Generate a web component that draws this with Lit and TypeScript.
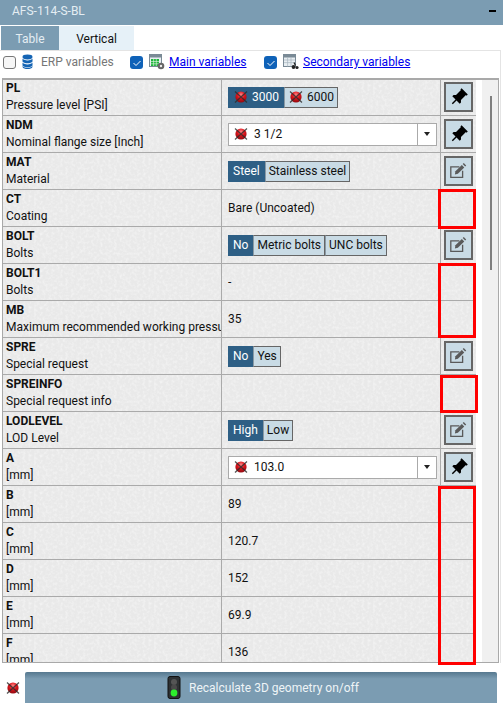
import { LitElement, html, css, svg } from "lit";
import { customElement } from "lit/decorators.js";

type Row = { k: string; l: string; v?: any; a?: "pin" | "edit" };

const noIcon = (cls = "no") => html`<svg class=${cls} viewBox="0 0 14 14">
  <defs><radialGradient id="rg" cx=".5" cy=".3" r=".7"><stop offset="0" stop-color="#f88"/><stop offset=".45" stop-color="#e0161d"/><stop offset="1" stop-color="#8d0a10"/></radialGradient></defs>
  <circle cx="7" cy="7" r="5.6" fill="url(#rg)"/>
  <path d="M1 1.5l12 11M13 1.5L1 12.5" stroke="#2c2c2c" stroke-width="1.3" opacity=".8"/>
</svg>`;

const pin = html`<svg class="ico" viewBox="0 0 24 24"><g transform="rotate(45 12 12)"><path fill="#000" d="M16 12V4h1V2H7v2h1v8l-2 2v2h5.2v6h1.6v-6H18v-2z"/></g></svg>`;
const edit = html`<svg class="ico" viewBox="0 0 24 24">
  <path d="M13 6.8H3.2v11.9h13.5v-7.5" fill="none" stroke="#5a5a5a" stroke-width="1.5"/>
  <path d="M8.5 11.8L15.8 4.5l2.8 2.8-7.3 7.3-3.4.8z" fill="#5a5a5a"/><path d="M16.8 3.5l1.2-1.2 2.8 2.8-1.2 1.2z" fill="#5a5a5a"/>
</svg>`;

const seg = (items: { t: string; on?: boolean; icon?: boolean }[]) => html`<div class="segs">
  ${items.map((i) => html`<span class="seg ${i.on ? "on" : ""}">${i.icon ? noIcon("no si") : ""}${i.t}</span>`)}
</div>`;
const drop = (t: string) => html`<div class="drop"><span class="dv">${noIcon()}${t}</span><span class="arrow"><i></i></span></div>`;

const rows: Row[] = [
  { k: "PL", l: "Pressure level [PSI]", v: seg([{ t: "3000", on: true, icon: true }, { t: "6000", icon: true }]), a: "pin" },
  { k: "NDM", l: "Nominal flange size [Inch]", v: drop("3 1/2"), a: "pin" },
  { k: "MAT", l: "Material", v: seg([{ t: "Steel", on: true }, { t: "Stainless steel" }]), a: "edit" },
  { k: "CT", l: "Coating", v: "Bare (Uncoated)" },
  { k: "BOLT", l: "Bolts", v: seg([{ t: "No", on: true }, { t: "Metric bolts" }, { t: "UNC bolts" }]), a: "edit" },
  { k: "BOLT1", l: "Bolts", v: "-" },
  { k: "MB", l: "Maximum recommended working pressure", v: "35" },
  { k: "SPRE", l: "Special request", v: seg([{ t: "No", on: true }, { t: "Yes" }]), a: "edit" },
  { k: "SPREINFO", l: "Special request info", v: "" },
  { k: "LODLEVEL", l: "LOD Level", v: seg([{ t: "High", on: true }, { t: "Low" }]), a: "edit" },
  { k: "A", l: "[mm]", v: drop("103.0"), a: "pin" },
  { k: "B", l: "[mm]", v: "89" },
  { k: "C", l: "[mm]", v: "120.7" },
  { k: "D", l: "[mm]", v: "152" },
  { k: "E", l: "[mm]", v: "69.9" },
  { k: "F", l: "[mm]", v: "136" },
];

const tick = svg`<path d="M3.5 7l2.5 2.5 4.5-4.5" fill="none" stroke="#fff" stroke-width="1"/>`;

@customElement("app-root")
export class AppRoot extends LitElement {
  static styles = css`
    :host { display: flex; flex-direction: column; width: 503px; height: 703px; overflow: hidden; background: #fff;
      font-family: Roboto, "Noto Sans", sans-serif; font-size: 12px; color: #111; }
    .title { height: 25px; flex: none; background: #7b9cb2; color: #e4edf2; display: flex; align-items: center; justify-content: space-between; padding: 0 7px 3px 12px; box-sizing: border-box; }
    .minus { width: 7px; height: 2px; background: #000; }
    .tabs { display: flex; height: 25px; flex: none; margin: 1px 0 0 1px; }
    .tab { display: flex; align-items: center; justify-content: center; }
    .t1 { width: 58px; background: #7b9cb2; color: #e4edf2; }
    .t2 { width: 75px; background: #e6f1f8; color: #111; }
    .panel { flex: none; height: 613px; box-sizing: border-box; margin-right: 2px; border: 1px solid #e4e4e4; border-bottom: none; border-left: none; display: flex; flex-direction: column; margin-top: -1px; }
    .checks { height: 27px; flex: none; display: flex; align-items: center; padding: 0 0 5px 3px; box-sizing: border-box; }
    .cb { width: 13px; height: 13px; border-radius: 3px; box-sizing: border-box; flex: none; }
    .cb.off { border: 1px solid #777; background: #f6f6f6; }
    .cb.onb { background: #0f62b8; }
    .cb.onb svg { display: block; width: 13px; height: 13px; }
    .chk { display: flex; align-items: center; }
    .chk svg.g { width: 16px; height: 16px; flex: none; }
    .erp { width: 127px; }
    .erp svg.g { margin: 0 8px 0 6px; width: 11px; }
    .erp .lbl { color: #767676; }
    .main { width: 134px; }
    .main svg.g, .sec svg.g { margin: 0 4px 0 6px; }
    a { color: #0000ee; text-decoration: underline; }
    .gridwrap { position: relative; height: 585px; margin: 0 1px 0 2px; flex: none; border: solid #a9a9a9; border-width: 2px 1px 1px 1px; box-sizing: border-box; display: flex; }
    .clip { width: 473px; flex: none; overflow: hidden; }
    .grid { margin-top: -1px; }
    .row { display: grid; grid-template-columns: 219px 219px 35px; height: 37px; box-sizing: border-box; border-bottom: 1px solid #aaa; }
    .cell { box-sizing: border-box; border-right: 1px solid #aaa; min-width: 0; display: flex; align-items: center;
      background-color: #e9e9e9;
      background-image: url("data:image/svg+xml,%3Csvg xmlns='http://www.w3.org/2000/svg' width='120' height='120'%3E%3Cfilter id='n'%3E%3CfeTurbulence type='fractalNoise' baseFrequency='.35' numOctaves='2' seed='4'/%3E%3CfeColorMatrix values='0 0 0 0 1 0 0 0 0 1 0 0 0 0 1 0 0 0 1 -.42'/%3E%3C/filter%3E%3Crect width='120' height='120' filter='url(%23n)'/%3E%3C/svg%3E"); }
    .c1 { display: block; padding: 1px 0 0 3px; overflow: hidden; white-space: nowrap; line-height: 16px; }
    .c1 b { display: block; font-weight: 700; height: 17px; }
    .c2 { padding-left: 6px; }
    .c3 { justify-content: center; border-right: none; }
    .act { width: 29px; height: 30px; box-sizing: border-box; border: 2px solid #666; background: #c9dbe5; display: flex; align-items: center; justify-content: center; }
    svg.ico { width: 21px; height: 21px; }
    .segs { display: inline-flex; height: 21px; }
    .seg { display: inline-flex; align-items: center; padding: 0 3px; background: #c9dbe5; color: #111; border: 1px solid #666; box-sizing: border-box; }
    .seg.on { background: #2e5f85; color: #fff; border-color: #2e5f85; padding: 0 4px; }
    .seg + .seg { border-left-color: #8a9aa5; }
    svg.no { width: 14px; height: 14px; margin: 0 6px 0 1px; flex: none; }
    svg.no.si { margin-right: 4px; }
    .drop { width: 209px; height: 23px; display: flex; box-sizing: border-box; border: 1px solid #aaa; background: #fff; }
    .dv { flex: 1; display: flex; align-items: center; padding-left: 4px; border-right: 1px solid #aaa; }
    .arrow { width: 18px; display: flex; align-items: center; justify-content: center; }
    .arrow i { border: solid transparent; border-width: 4px 3.5px 0; border-top-color: #222; }
    .sb { flex: 1; display: flex; }
    .sb1 { width: 6px; background: #fff; }
    .sb2 { flex: 1; background: #f0f0f0; position: relative; }
    .thumb { position: absolute; left: 8px; top: 16px; width: 2px; height: 174px; background: #7f7f7f; }
    .red { position: absolute; box-sizing: border-box; border: 3px solid #f00; width: 38px; pointer-events: none; }
    .bottom { flex: 1; display: flex; align-items: flex-end; padding: 0 6px 0 6px; }
    .bottom svg.no { margin: 0 5px 8px 0; width: 14px; height: 14px; }
    .btn { flex: 1; height: 31px; background: linear-gradient(#56788f, #7b9cb2 22%, #7b9cb2); border-radius: 2px 2px 0 0; color: #eef4f7; display: flex; align-items: center; justify-content: center; gap: 8px; padding-left: 4px; }
    .tl { width: 14px; height: 23px; }
  `;

  render() {
    return html`
      <div class="title"><span>AFS-114-S-BL</span><span class="minus"></span></div>
      <div class="tabs"><div class="tab t1">Table</div><div class="tab t2">Vertical</div></div>
      <div class="panel">
        <div class="checks">
          <div class="chk erp"><span class="cb off"></span>
            <svg class="g" viewBox="0 0 11 16"><g fill="#1464b4"><ellipse cx="5.5" cy="3" rx="5" ry="2.4"/><path d="M.5 4.6c1 2.4 9 2.4 10 0v2.8c-1 2.4-9 2.4-10 0z"/><path d="M.5 8.6c1 2.4 9 2.4 10 0v2.8c-1 2.4-9 2.4-10 0z"/><path d="M.5 12c1 2.4 9 2.4 10 0v1c-1 2.8-9 2.8-10 0z"/></g></svg>
            <span class="lbl">ERP variables</span></div>
          <div class="chk main"><span class="cb onb"><svg viewBox="0 0 13 13">${tick}</svg></span>
            <svg class="g" viewBox="0 0 16 16"><rect x=".5" y=".5" width="12" height="12" fill="#e8eef2" stroke="#7a8a96"/><rect x="1" y="1" width="11" height="2.5" fill="#7a8a96"/><rect x="2" y="5" width="8" height="7" fill="#1fb53c"/><path d="M2 7.5h8M2 9.8h8M4.6 5v7M7.3 5v7" stroke="#e8f5e8" stroke-width=".6"/><circle cx="12" cy="12" r="3.3" fill="#666"/><circle cx="12" cy="12" r="1.2" fill="#eee"/></svg>
            <a>Main variables</a></div>
          <div class="chk sec"><span class="cb onb"><svg viewBox="0 0 13 13">${tick}</svg></span>
            <svg class="g" viewBox="0 0 16 16"><rect x=".5" y=".5" width="12" height="12" fill="#e8eef2" stroke="#7a8a96"/><rect x="1" y="1" width="11" height="2.5" fill="#7a8a96"/><path d="M1 6h11M1 8.6h11M4.6 3.5v9M8 3.5v9" stroke="#a9b6c0" stroke-width=".7"/><circle cx="10.5" cy="13" r="1.9" fill="#222"/><circle cx="14" cy="13.5" r="1.6" fill="#222"/><path d="M11 8.5l1.5 3" stroke="#222" stroke-width="1.2"/></svg>
            <a>Secondary variables</a></div>
        </div>
        <div class="gridwrap">
          <div class="clip"><div class="grid">
            ${rows.map((r) => html`<div class="row">
              <div class="cell c1"><b>${r.k}</b>${r.l}</div>
              <div class="cell c2">${r.v}</div>
              <div class="cell c3">${r.a ? html`<div class="act">${r.a === "pin" ? pin : edit}</div>` : ""}</div>
            </div>`)}
          </div></div>
          <div class="sb"><div class="sb1"></div><div class="sb2"><div class="thumb"></div></div></div>
          <div class="red" style="left:435px;top:109px;height:40px"></div>
          <div class="red" style="left:435px;top:183px;height:75px"></div>
          <div class="red" style="left:437px;top:295px;height:38px"></div>
          <div class="red" style="left:435px;top:406px;height:179px"></div>
        </div>
      </div>
      <div class="bottom">
        ${noIcon()}
        <div class="btn">
          <svg class="tl" viewBox="0 0 14 23"><rect x="1" y=".5" width="12" height="22" rx="2" fill="#2e3133" stroke="#111"/><circle cx="7" cy="6" r="3" fill="#555"/><circle cx="7" cy="11.5" r="3" fill="#4a4a4a"/><circle cx="7" cy="17" r="3.4" fill="#2dee2d"/></svg>
          <span>Recalculate 3D geometry on/off</span>
        </div>
      </div>
    `;
  }
}
